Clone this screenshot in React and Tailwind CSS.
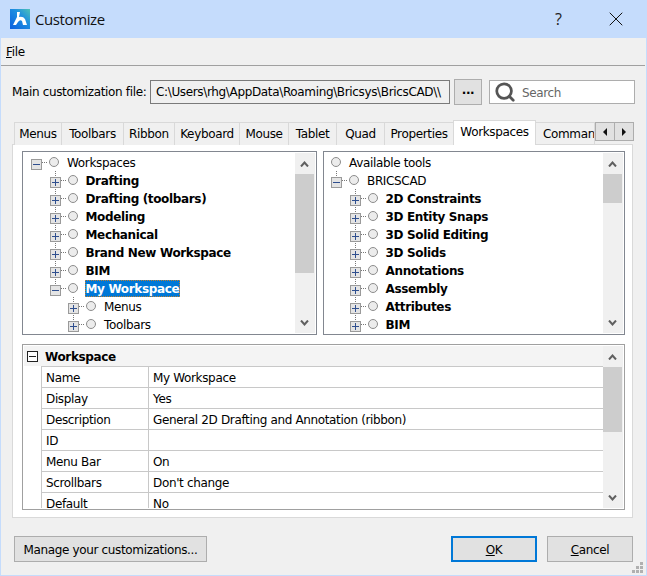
import { Search, X } from 'lucide-react';

const tabs = [
  { name: 'Menus', w: 'w-[48px]' },
  { name: 'Toolbars', w: 'w-[63px]' },
  { name: 'Ribbon', w: 'w-[52px]' },
  { name: 'Keyboard', w: 'w-[66px]' },
  { name: 'Mouse', w: 'w-[50px]' },
  { name: 'Tablet', w: 'w-[49px]' },
  { name: 'Quad', w: 'w-[49px]' },
  { name: 'Properties', w: 'w-[70px]' },
];

const leftTree = [
  { label: 'Workspaces', depth: 0, box: 'minus' },
  { label: 'Drafting', depth: 1, box: 'plus', bold: true, up: true, down: true },
  { label: 'Drafting (toolbars)', depth: 1, box: 'plus', bold: true, up: true, down: true },
  { label: 'Modeling', depth: 1, box: 'plus', bold: true, up: true, down: true },
  { label: 'Mechanical', depth: 1, box: 'plus', bold: true, up: true, down: true },
  { label: 'Brand New Workspace', depth: 1, box: 'plus', bold: true, up: true, down: true },
  { label: 'BIM', depth: 1, box: 'plus', bold: true, up: true, down: true },
  { label: 'My Workspace', depth: 1, box: 'minus', bold: true, up: true, selected: true },
  { label: 'Menus', depth: 2, box: 'plus', up: true, down: true },
  { label: 'Toolbars', depth: 2, box: 'plus', up: true, down: true },
];

const rightTree = [
  { label: 'Available tools', depth: 'top' },
  { label: 'BRICSCAD', depth: 0, box: 'minus', up: true },
  { label: '2D Constraints', depth: 1, box: 'plus', bold: true, up: true, down: true },
  { label: '3D Entity Snaps', depth: 1, box: 'plus', bold: true, up: true, down: true },
  { label: '3D Solid Editing', depth: 1, box: 'plus', bold: true, up: true, down: true },
  { label: '3D Solids', depth: 1, box: 'plus', bold: true, up: true, down: true },
  { label: 'Annotations', depth: 1, box: 'plus', bold: true, up: true, down: true },
  { label: 'Assembly', depth: 1, box: 'plus', bold: true, up: true, down: true },
  { label: 'Attributes', depth: 1, box: 'plus', bold: true, up: true, down: true },
  { label: 'BIM', depth: 1, box: 'plus', bold: true, up: true, down: true },
];

const props = [
  ['Name', 'My Workspace'],
  ['Display', 'Yes'],
  ['Description', 'General 2D Drafting and Annotation (ribbon)'],
  ['ID', ''],
  ['Menu Bar', 'On'],
  ['Scrollbars', "Don't change"],
  ['Default', 'No'],
];

const depthPad = { top: '-ml-[18px]', 0: 'pl-0', 1: 'pl-[18.5px]', 2: 'pl-[37px]' };

const TreeGlyphs = ({ box, up, down }) => (
  <svg width="36" height="18" className="shrink-0" shapeRendering="crispEdges">
    {up && <line x1="5.5" y1="0" x2="5.5" y2="7" stroke="#777" strokeDasharray="1 1" />}
    {down && <line x1="5.5" y1="16" x2="5.5" y2="18" stroke="#777" strokeDasharray="1 1" />}
    {box && <line x1="11" y1="9.5" x2="16" y2="9.5" stroke="#777" strokeDasharray="1 1" />}
    {box && <rect x="0.5" y="6.5" width="10" height="10" fill="#e4e4e4" stroke="#9a9a9a" />}
    {box && <line x1="2" y1="11.5" x2="9" y2="11.5" stroke="#2f4f8f" />}
    {box === 'plus' && <line x1="5.5" y1="8" x2="5.5" y2="15" stroke="#2f4f8f" />}
    <circle cx="23" cy="9" r="4.5" fill="#ececec" stroke="#8c8c8c" shapeRendering="auto" />
  </svg>
);

const Scrollbar = ({ thumbH }) => (
  <div className="w-[20px] shrink-0 bg-[#f0f0f0] flex flex-col self-stretch">
    <div className="h-[21px] w-[19px] shrink-0 flex items-center justify-center">
      <svg width="9" height="6"><path d="M1 5.5 L4.5 1.5 L8 5.5" fill="none" stroke="#606060" strokeWidth="2" /></svg>
    </div>
    <div className="flex-1">
      <div className={`${thumbH} w-[19px] bg-[#cdcdcd]`} />
    </div>
    <div className="h-[21px] w-[19px] shrink-0 flex items-center justify-center">
      <svg width="9" height="6"><path d="M1 .5 L4.5 4.5 L8 .5" fill="none" stroke="#606060" strokeWidth="2" /></svg>
    </div>
  </div>
);

const Tree = ({ rows, className, indent, thumbH }) => (
  <div className={`h-[184px] border border-[#828790] bg-white flex p-px ${className}`}>
    <div className={`flex-1 min-w-0 overflow-hidden ${indent}`}>
      {rows.map((r) => (
        <div key={r.label + r.depth} className={`flex items-center h-[18px] ${depthPad[r.depth]}`}>
          <TreeGlyphs box={r.box} up={r.up} down={r.down} />
          <span
            className={
              'whitespace-nowrap ' +
              (r.selected
                ? 'h-[17px] mt-px leading-[18px] bg-[#0078d7] text-white px-px -ml-px outline-1 outline-dotted outline-[#c08030] -outline-offset-1 font-bold'
                : 'h-[18px] leading-[20px] text-black ' + (r.bold ? 'font-bold' : ''))
            }
          >
            {r.label}
          </span>
        </div>
      ))}
    </div>
    <Scrollbar thumbH={thumbH} />
  </div>
);

const Btn = ({ className, children }) => (
  <button className={`h-[26px] bg-[#e1e1e1] border border-[#adadad] text-black ${className}`}>{children}</button>
);

export default function App() {
  return (
    <div className="w-[647px] h-[576px] bg-[#f0f0f0] flex flex-col overflow-hidden relative border-x border-b border-[#c5dcfc] text-[12px] tracking-[-0.35px] text-black font-['DejaVu_Sans',sans-serif]">
      <div className="h-[38px] shrink-0 -mx-px bg-[#c5dcfc] flex items-center pl-[10px] tracking-normal">
        <svg width="20" height="20" viewBox="0 0 20 20" className="shrink-0">
          <defs>
            <linearGradient id="bg" x1="0" y1="1" x2="1" y2="0">
              <stop offset="0" stopColor="#0a5fe0" />
              <stop offset="0.6" stopColor="#1e8fe0" />
              <stop offset="1" stopColor="#4fc2b8" />
            </linearGradient>
          </defs>
          <rect width="20" height="20" fill="url(#bg)" />
          <path d="M7 3 L10 3 L9 8 Q13 7 15 10 L17 16 L13 16 L12 12 Q10 10 8 13 L6 16 L3 16 L7 8 Z" fill="#fff" />
        </svg>
        <span className="ml-[5px] text-[15px] tracking-[-0.4px] font-['Open_Sans',sans-serif] text-[#111]">Customize</span>
        <span className="ml-auto mr-[42px] text-[16px] font-['Open_Sans',sans-serif] text-[#222]">?</span>
        <X size={24} strokeWidth={1} className="mr-[19px] text-[#111]" />
      </div>

      <div className="h-[28px] shrink-0 flex items-center pl-[5px] border-b border-[#a0a0a0] mr-px">
        <span><span className="underline">F</span>ile</span>
      </div>

      <div className="flex items-center h-[26px] mt-[13px] shrink-0">
        <span className="ml-[11px] w-[138px] whitespace-nowrap">Main customization file:</span>
        <div className="w-[300px] h-[24px] bg-[#f0f0f0] border border-[#7a7a7a] flex items-center px-[5px] overflow-hidden whitespace-nowrap">
          C:\Users\rhg\AppData\Roaming\Bricsys\BricsCAD\\
        </div>
        <Btn className="w-[28px] ml-[4px] font-bold pb-1">...</Btn>
        <div className="w-[146px] h-[24px] ml-[7px] bg-white border border-[#adadad] flex items-center pl-[4px] text-[#666]">
          <Search size={22} strokeWidth={3} className="text-[#555]" />
          <span className="ml-[6px] pt-[2px]">Search</span>
        </div>
      </div>

      <div className="ml-[13px] mt-[15px] h-[25px] w-[620px] shrink-0 flex items-end relative z-10 overflow-hidden">
        {tabs.map((t) => (
          <div key={t.name} className={`${t.w} h-[23px] border border-b-0 border-[#d9d9d9] -mr-px flex items-center justify-center bg-[#f0f0f0]`}>
            {t.name}
          </div>
        ))}
        <div className="w-[83px] h-[25px] bg-white border border-b-0 border-[#d9d9d9] flex items-start justify-center pt-[2px] -mr-px">Workspaces</div>
        <div className="w-[60px] h-[23px] border border-b-0 border-[#d9d9d9] flex items-center pl-[7px] overflow-hidden whitespace-nowrap">Commands</div>
        <div className="absolute right-0 top-[2px] flex h-[19px]">
          <div className="w-[20px] bg-[#e1e1e1] border border-[#adadad] flex items-center justify-center">
            <svg width="6" height="8"><path d="M5 0 L1 4 L5 8 Z" fill="#111" /></svg>
          </div>
          <div className="w-[20px] -ml-px bg-[#e1e1e1] border border-[#adadad] flex items-center justify-center">
            <svg width="6" height="8"><path d="M1 0 L5 4 L1 8 Z" fill="#111" /></svg>
          </div>
        </div>
      </div>

      <div className="ml-[11px] -mt-px w-[621px] h-[374px] shrink-0 bg-white border border-[#d9d9d9] pt-[6px] pl-[9px]">
        <div className="flex gap-[6px]">
          <Tree rows={leftTree} className="w-[295px]" indent="pl-[7px]" thumbH="h-[99px]" />
          <Tree rows={rightTree} className="w-[302px]" indent="pl-[6px]" thumbH="h-[29px]" />
        </div>

        <div className="mt-[9px] h-[166px] w-[603px] border border-[#a0a0a0] flex p-px">
          <div className="flex-1 min-w-0 overflow-hidden">
            <div className="h-[20px] bg-[#f4f4f4] flex items-center pl-[3px]">
              <svg width="11" height="11" className="shrink-0" shapeRendering="crispEdges">
                <rect x="0.5" y="0.5" width="10" height="10" fill="#fff" stroke="#222" />
                <line x1="2" y1="5.5" x2="9" y2="5.5" stroke="#222" />
              </svg>
              <span className="ml-[7px] pt-[2px] font-bold">Workspace</span>
            </div>
            <div className="ml-[17px] border-l border-[#c8c8c8]">
              {props.map(([k, v]) => (
                <div key={k} className="h-[21px] border-t border-[#c8c8c8] flex items-center">
                  <span className="w-[107px] pl-[4px] pt-[2px] border-r border-[#c8c8c8] h-full flex items-center">{k}</span>
                  <span className="pl-[4px] pt-[2px] whitespace-nowrap">{v}</span>
                </div>
              ))}
            </div>
          </div>
          <Scrollbar thumbH="h-[65px]" />
        </div>
      </div>

      <div className="flex items-center mt-[18px] ml-[13px] mr-[13px] shrink-0">
        <Btn className="w-[193px] pt-[2px]">Manage your customizations...</Btn>
        <Btn className="w-[86px] ml-auto pt-[2px] !border-2 !border-[#0078d7]"><span className="underline">O</span>K</Btn>
        <Btn className="w-[86px] ml-[10px] pt-[2px]"><span className="underline">C</span>ancel</Btn>
      </div>

      <svg width="12" height="12" className="absolute right-[2px] bottom-[1px]" shapeRendering="crispEdges">
        <g fill="#b0b0b0">
          <rect x="8" y="0" width="3" height="3" />
          <rect x="4" y="4" width="3" height="3" />
          <rect x="8" y="4" width="3" height="3" />
          <rect x="0" y="8" width="3" height="3" />
          <rect x="4" y="8" width="3" height="3" />
          <rect x="8" y="8" width="3" height="3" />
        </g>
      </svg>
    </div>
  );
}
